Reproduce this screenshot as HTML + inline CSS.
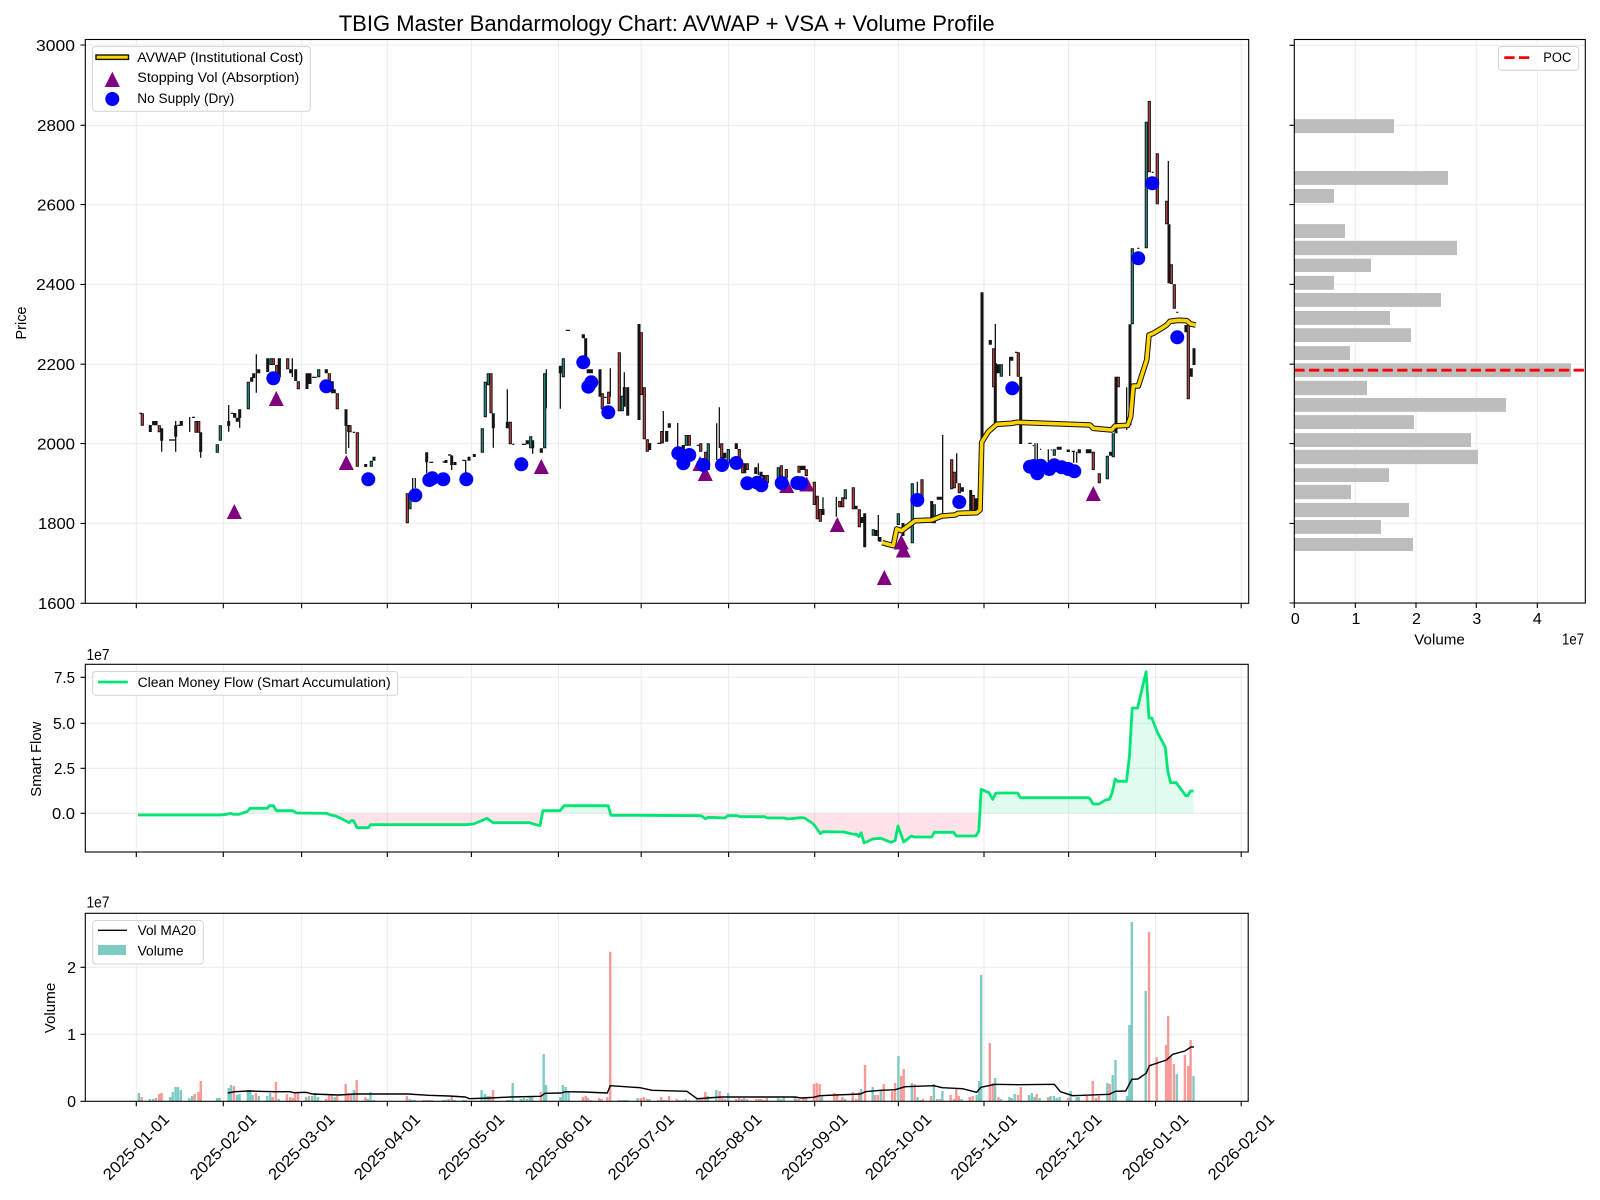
<!DOCTYPE html>
<html lang="en">
<head>
<meta charset="utf-8">
<title>TBIG Master Bandarmology Chart</title>
<style>
html,body{margin:0;padding:0;background:#fff;width:1600px;height:1200px;overflow:hidden}
svg{display:block}
text{font-family:"Liberation Sans",sans-serif;fill:#000}
.t{font-size:16px}
.l{font-size:14.5px}
.g{font-size:13.5px}
</style>
</head>
<body>
<svg width="1600" height="1200" viewBox="0 0 1600 1200" xmlns="http://www.w3.org/2000/svg">
<defs>
<clipPath id="above"><rect x="85" y="664" width="1164" height="149.3"/></clipPath>
<clipPath id="below"><rect x="85" y="813.3" width="1164" height="39"/></clipPath>
<path id="mf" d="M138 815L220.4 815L226.5 814.3L230.6 813.3L233.5 814.3L238.8 814.3L246.9 811.7L250.2 808.3L267.3 808.3L269.4 805.7L273.5 805.7L276.3 810.7L292.7 810.7L296.7 813L326.5 813.3L330.6 815L334.7 815.7L340.8 818.3L349 822.7L351 820.7L353.5 820.7L357.1 827.7L368.2 827.7L370.6 824.7L465.3 824.7L473.5 824L481.6 820.7L486.9 818.3L493.1 822.7L529.4 822.7L534.7 824.3L540 825.7L542.9 810.7L560 810.7L564.1 805.7L608.2 805.7L611 815.3L640 815.3L701.2 815.7L705.3 818.7L708.6 817.3L717.6 817.7L724.9 818L727.8 815.7L737.1 815.7L740 816.7L764.5 816.7L767.3 818L784.9 818L786.9 819L801.2 817.7L804.5 818L813.5 824L820.4 833.7L822.9 831.7L844.1 832L852.2 834L856.3 834.3L858.8 836.7L861.2 832.7L864.1 843L872.7 839L880.8 838.3L891 842.3L895.1 840.7L898 826L903.7 842L911.4 836L914.3 837L931.8 837L934.3 832.3L953.5 832.3L956.3 836L975.9 836L978.8 831L981.2 789.3L989 792.7L992.7 799.3L995.9 793L1017.6 793L1020.4 797.7L1088.2 797.7L1090.2 799L1093.1 804L1099.2 804L1105.3 800L1109.4 799.3L1112.2 792.7L1115.1 779L1117.6 781.3L1126.5 781.3L1129.4 756.7L1132.2 708L1137.6 708L1146.1 671.7L1149 718L1151.8 718L1157.6 732.7L1165.3 747.3L1167.8 771L1170.6 782.7L1176.3 782.7L1185.7 795.7L1187.8 795.7L1190.6 791L1193.5 791"/>
<path id="mfa" d="M138 813.3L138 815L220.4 815L226.5 814.3L230.6 813.3L233.5 814.3L238.8 814.3L246.9 811.7L250.2 808.3L267.3 808.3L269.4 805.7L273.5 805.7L276.3 810.7L292.7 810.7L296.7 813L326.5 813.3L330.6 815L334.7 815.7L340.8 818.3L349 822.7L351 820.7L353.5 820.7L357.1 827.7L368.2 827.7L370.6 824.7L465.3 824.7L473.5 824L481.6 820.7L486.9 818.3L493.1 822.7L529.4 822.7L534.7 824.3L540 825.7L542.9 810.7L560 810.7L564.1 805.7L608.2 805.7L611 815.3L640 815.3L701.2 815.7L705.3 818.7L708.6 817.3L717.6 817.7L724.9 818L727.8 815.7L737.1 815.7L740 816.7L764.5 816.7L767.3 818L784.9 818L786.9 819L801.2 817.7L804.5 818L813.5 824L820.4 833.7L822.9 831.7L844.1 832L852.2 834L856.3 834.3L858.8 836.7L861.2 832.7L864.1 843L872.7 839L880.8 838.3L891 842.3L895.1 840.7L898 826L903.7 842L911.4 836L914.3 837L931.8 837L934.3 832.3L953.5 832.3L956.3 836L975.9 836L978.8 831L981.2 789.3L989 792.7L992.7 799.3L995.9 793L1017.6 793L1020.4 797.7L1088.2 797.7L1090.2 799L1093.1 804L1099.2 804L1105.3 800L1109.4 799.3L1112.2 792.7L1115.1 779L1117.6 781.3L1126.5 781.3L1129.4 756.7L1132.2 708L1137.6 708L1146.1 671.7L1149 718L1151.8 718L1157.6 732.7L1165.3 747.3L1167.8 771L1170.6 782.7L1176.3 782.7L1185.7 795.7L1187.8 795.7L1190.6 791L1193.5 791L1193.5 813.3Z"/>
</defs>
<rect width="1600" height="1200" fill="#fff"/>

<text x="338.7" y="31" font-size="22" textLength="656" lengthAdjust="spacingAndGlyphs">TBIG Master Bandarmology Chart: AVWAP + VSA + Volume Profile</text>

<!-- MAIN PANEL GRID -->
<path fill="none" stroke="#ebebeb" stroke-width="1" d="M136.3 39.5V603.3M223.3 39.5V603.3M301.6 39.5V603.3M387.3 39.5V603.3M471.4 39.5V603.3M558.4 39.5V603.3M641.2 39.5V603.3M728.6 39.5V603.3M814.7 39.5V603.3M898.4 39.5V603.3M984 39.5V603.3M1068.6 39.5V603.3M1155.5 39.5V603.3M1241.2 39.5V603.3M85.3 45H1248.7M85.3 125.5H1248.7M85.3 204.8H1248.7M85.3 284.4H1248.7M85.3 364.2H1248.7M85.3 443.6H1248.7M85.3 523.4H1248.7"/>

<!-- CANDLES: wicks -->
<path fill="none" stroke="#000" stroke-width="1.2" d="M161.7 440V451.7M175.7 421V451.7M189.7 417V432M200.7 450V457.7M228.7 405V431.7M239.7 418V427.7M256.3 354.3V392.7M292.3 358.3V377M346 426V454M348.7 432V448M412.7 478V493M415.3 478V488M426.7 462V473.3M451.7 455V470M465.7 460V473M493.3 428V447.7M507.3 389.3V421.7M532.7 448V453.7M546.3 369.3V408.3M560.3 373V408.7M610.3 368.3V396.7M624.3 372.3V387M663.3 411V443.3M677.7 423V446.7M716.7 423.3V460M719.3 407.3V448M758.3 463.3V475M836.3 496.7V516.7M823 497.3V509M878.3 515V541M917.3 481.7V496M942.7 435V513.3M956.7 453.3V483.3M995.3 324V363M1009.7 356.7V376M1035 443.3V460M1037.3 443.3V460M1048.3 449.3V461.7M1073.7 451.7V462.7M1076.7 451.7V462.7M1126.7 387.3V430M1168.3 161V224.3M139.3 413.3H142M169 440H175M177.3 425.3H180M192 417.3H195M230.7 413.3H233.3M312 377.3H316.7M352.7 432.3H355M429.3 462.3H433.3M442.7 462H445M448 455H451M462.3 460.3H465M512.3 444.3H514.3M521.7 444.3H526M565.7 330.3H570M604 397.3H606.7M657.3 443.3H661.7M696.7 445.3H699M1028.3 443.3H1031.7M1032.7 445.7H1034M1040 449.3H1041.3M1050.7 450H1051.7M1071.7 451.3H1075M1015 352.3H1017.3M1137.3 248.3H1139.3M1151.7 172.3H1153.7M1176.3 312.3H1178.3"/>
<!-- CANDLES: black bodies/outlines -->
<path fill="none" stroke="#141414" stroke-width="3" d="M150.3 425V432M161.7 428.3V440.7M175.7 425.3V436.7M200.7 432.3V452M228.7 421V426M239.7 409.3V418M253.7 373.3V378M267.7 358.3V372M295.7 369.3V381M307 373.3V389M310 373.3V384M332.3 381.3V393.3M334.3 389.3V393.3M346 409.3V426M348.7 425V432M365.7 464V467M374 456.7V460.7M426.7 452.3V462.3M446 460V463M451.7 456V465M455 462V465M469 456.7V460.7M474.3 454V457M493.3 413.3V428.3M507.3 421.7V428.3M532.7 440.3V448.3M560.3 365.7V373.3M585.7 338.3V366.7M600 369.3V396.7M627.7 387.3V415.7M639 324V420M624.3 387V406.7M649.7 443V450M764 475V485M755.7 467.3V474M744.7 463.3V473.3M823 509V515M876 530V536M880 537V541.7M864.7 513.3V547.3M861.7 517V523M903 523V536M931.7 501V523M976 498.3V511.7M970.7 490V510M982 292.3V440M995.3 363V423.3M998.3 364.3V373.3M1020.7 376.7V444M1116 376.7V433.3M1130 324.3V425M1169 224.3V283.3M1191.3 368.3V376.7M1194 348.3V365M1087.3 449.3V453.3M1090 449.3V453.3M936.7 498.3H942.7M1056.7 448.3H1061.7"/>
<!-- Red candle outlines + fills -->
<path fill="none" stroke="#141414" stroke-width="3.2" d="M142.3 413.3V425.7M156 421V425.3M159.3 425.3V432.3M196 421V432.7M198.7 421V432.7M234.7 413V417.7M273.3 358.3V365M276.7 365V373.3M287.7 358.3V369.3M290.7 369.3V373.3M298.3 381.3V389.3M326.3 369.3V373.3M329.3 373.3V381.7M337.3 393.3V409.3M350 425.3V432.3M357.3 432.3V466.7M407.3 493.3V523.3M491 373.3V413.3M510.3 421.7V444.3M541.3 448.3V452.7M583.3 334.3V338.3M588.3 369.3V373.3M591.3 369.3V373.3M602.3 393.3V409.3M608.7 391.7V404M619.3 352.3V411.3M641.3 332.3V395M644.3 387.3V439.3M647.3 439.3V451.7M661.7 431V443.3M669.3 423.3V427.7M683.3 445V453M689.3 435V445.7M700.7 443.3V451.7M705.7 451.7V463.3M721.7 443.3V458.3M724.7 452.7V458.3M736.3 443.3V449M739.3 449V463.3M742.7 463.3V473.3M747.3 463.3V470M761 471.7V476.7M767.3 475V483.3M781.3 465.3V476.7M786.3 469V478.3M799 465.7V472.7M801.7 465.7V470M804 465.7V470M806.3 469.3V476M814.3 481.7V505M817.3 495.7V519.3M820.3 509V521.7M839.7 501V507.3M842.7 497.3V507.3M853.3 487.3V509.3M856 505.7V509.3M859.3 509.3V527.3M922 479.3V503.3M951.7 459.3V489.3M954.3 471.7V488.3M959.3 483.3V493.3M973.3 495V510.7M990.3 340V344.7M993.7 348.3V387.3M1018.3 352.3V376.7M1068.3 449.5V452M1093.3 451.7V470M1099.3 473.3V483.3M1110.7 451.7V455.7M1118.3 376.7V387.3M1149.3 101V172.3M1157.3 153.3V204.3M1166.7 200.7V224.3M1171.3 264.3V284M1174.3 284.3V308.7M1186 325V332.3M1188.3 325V399.3"/>
<path fill="none" stroke="#141414" stroke-width="3.2" d="M153.7 421V425.3M181.3 421V425.7M217.3 444.3V452.7M220.3 425.3V440.7M237.3 417.7V421.7M248.3 381.7V409.3M251.7 377.3V381.7M258.7 369.3V373.3M271 358.3V365M279.3 358.3V377.3M318.7 369.3V377.3M371.3 460.7V466.7M410 493.3V509.3M482.3 428.3V452.7M485.3 381.7V417.3M488.3 373.3V385.3M527.3 440.3V444.3M530.7 436.3V448.3M544.7 373.3V448.3M563.3 358.3V377.3M622.3 395.7V411.3M666.7 431V441.7M686.3 435V445.7M708.3 443.3V470M728.3 449V463.3M778.3 467.3V480M845.3 489.3V499.3M873.3 529.3V535.7M898.3 513.3V525M912.3 483.3V543.3M934.3 504.3V523.3M962.3 487.3V491.7M1001.3 364.3V376.7M1011.7 356.7V360.7M1054.3 449.3V455.7M1079.3 449.3V453.3M1107.3 455.7V479.3M1113.3 433.3V457.3M1132.3 248.3V324.3M1146.3 121.7V248.3"/>
<path fill="none" stroke="#b5403d" stroke-width="1.3" d="M142.3 414.3V424.7M159.3 426.3V431.3M196 422V431.7M198.7 422V431.7M273.3 359.3V364M276.7 366V372.3M287.7 359.3V368.3M298.3 382.3V388.3M329.3 374.3V380.7M337.3 394.3V408.3M350 426.3V431.3M357.3 433.3V465.7M407.3 494.3V522.3M491 374.3V412.3M510.3 422.7V443.3M602.3 394.3V408.3M608.7 392.7V403M619.3 353.3V410.3M641.3 333.3V394M644.3 388.3V438.3M647.3 440.3V450.7M661.7 432V442.3M689.3 436V444.7M700.7 444.3V450.7M705.7 452.7V462.3M721.7 444.3V457.3M739.3 450V462.3M742.7 464.3V472.3M747.3 464.3V469M767.3 476V482.3M781.3 466.3V475.7M786.3 470V477.3M799 466.7V471.7M806.3 470.3V475M814.3 482.7V504M817.3 496.7V518.3M820.3 510V520.7M839.7 502V506.3M842.7 498.3V506.3M853.3 488.3V508.3M859.3 510.3V526.3M922 480.3V502.3M951.7 460.3V488.3M954.3 472.7V487.3M959.3 484.3V492.3M973.3 496V509.7M993.7 349.3V386.3M1018.3 353.3V375.7M1093.3 452.7V469M1099.3 474.3V482.3M1118.3 377.7V386.3M1149.3 102V171.3M1157.3 154.3V203.3M1166.7 201.7V223.3M1171.3 265.3V283M1174.3 285.3V307.7M1188.3 326V398.3"/>
<path fill="none" stroke="#1f8a80" stroke-width="1.3" d="M217.3 445.3V451.7M220.3 426.3V439.7M248.3 382.7V408.3M271 359.3V364M318.7 370.3V376.3M371.3 461.7V465.7M410 494.3V508.3M482.3 429.3V451.7M485.3 382.7V416.3M488.3 374.3V384.3M530.7 437.3V447.3M544.7 374.3V447.3M563.3 359.3V376.3M622.3 396.7V410.3M686.3 436V444.7M708.3 444.3V469M728.3 450V462.3M778.3 468.3V479M845.3 490.3V498.3M873.3 530.3V534.7M898.3 514.3V524M912.3 484.3V542.3M934.3 505.3V522.3M1001.3 365.3V375.7M1054.3 450.3V454.7M1107.3 456.7V478.3M1113.3 434.3V456.3M1132.3 249.3V323.3M1146.3 122.7V247.3"/>

<!-- AVWAP -->
<path fill="none" stroke="#111" stroke-width="5.6" stroke-linejoin="round" d="M882.3 542.7L893.3 545.7L896.7 529L901.7 530.7L915 520.7L931.7 520L941.7 516L955 515L958.3 513.3L976.7 512.7L980 510L981.7 442.3L988.3 431.7L996.7 424.3L1011.7 423.3L1017.3 422.3L1090 425L1093.3 428.3L1111.7 430L1115 426L1127.7 425.3L1130.7 416.7L1133.3 386L1138.3 386L1146.7 360L1149 335L1153.3 333.3L1161.7 328.3L1166.7 325L1170 321.3L1178.3 320.3L1186.7 320.7L1190.7 324L1195.7 325"/>
<path fill="none" stroke="#ffd500" stroke-width="3.6" stroke-linejoin="round" d="M882.3 542.7L893.3 545.7L896.7 529L901.7 530.7L915 520.7L931.7 520L941.7 516L955 515L958.3 513.3L976.7 512.7L980 510L981.7 442.3L988.3 431.7L996.7 424.3L1011.7 423.3L1017.3 422.3L1090 425L1093.3 428.3L1111.7 430L1115 426L1127.7 425.3L1130.7 416.7L1133.3 386L1138.3 386L1146.7 360L1149 335L1153.3 333.3L1161.7 328.3L1166.7 325L1170 321.3L1178.3 320.3L1186.7 320.7L1190.7 324L1195.7 325"/>

<!-- Triangles -->
<path fill="#800080" d="M234.3 504l7.5 15h-15zM276.3 391l7.5 15h-15zM346.3 455l7.5 15h-15zM541.3 459l7.5 15h-15zM700 456l7.5 15h-15zM705.3 466l7.5 15h-15zM786.7 478l7.5 15h-15zM806.7 476.5l7.5 15h-15zM837.3 517l7.5 15h-15zM884.3 570l7.5 15h-15zM901.3 534.5l7.5 15h-15zM903.3 542.5l7.5 15h-15zM1093.3 486l7.5 15h-15z"/>
<!-- Blue circles -->
<g fill="#0000ff">
<circle cx="273.3" cy="378.3" r="7"/><circle cx="326.3" cy="386.3" r="7"/><circle cx="368.3" cy="479.3" r="7"/><circle cx="415.3" cy="495.3" r="7"/><circle cx="429.3" cy="480" r="7"/><circle cx="432.3" cy="478.3" r="7"/><circle cx="443.3" cy="479.3" r="7"/><circle cx="466.3" cy="479.3" r="7"/><circle cx="521.3" cy="464.3" r="7"/><circle cx="583.3" cy="362.3" r="7"/><circle cx="588.3" cy="386.7" r="7"/><circle cx="591.3" cy="382.3" r="7"/><circle cx="608.3" cy="412.3" r="7"/><circle cx="678.3" cy="453.3" r="7"/><circle cx="683.3" cy="463.3" r="7"/><circle cx="689.3" cy="455" r="7"/><circle cx="703.3" cy="465" r="7"/><circle cx="722" cy="465" r="7"/><circle cx="736.3" cy="463" r="7"/><circle cx="747.3" cy="483.3" r="7"/><circle cx="757.3" cy="482.7" r="7"/><circle cx="761.3" cy="485.3" r="7"/><circle cx="781.7" cy="483" r="7"/><circle cx="797.3" cy="483" r="7"/><circle cx="801" cy="483.3" r="7"/><circle cx="917.3" cy="500" r="7"/><circle cx="959.3" cy="502" r="7"/><circle cx="1012.3" cy="388.3" r="7"/><circle cx="1030" cy="466.7" r="7"/><circle cx="1034" cy="466" r="7"/><circle cx="1037.3" cy="473.3" r="7"/><circle cx="1040.7" cy="465.7" r="7"/><circle cx="1049.3" cy="469" r="7"/><circle cx="1054.3" cy="465.3" r="7"/><circle cx="1061.7" cy="467.3" r="7"/><circle cx="1068.3" cy="469" r="7"/><circle cx="1074.3" cy="471.3" r="7"/><circle cx="1177.3" cy="337.3" r="7"/><circle cx="1138.3" cy="258.3" r="7"/><circle cx="1152.3" cy="183.3" r="7"/>
</g>

<!-- Main axes frame + ticks -->
<rect x="85.3" y="39.5" width="1163.4" height="563.8" fill="none" stroke="#000" stroke-width="1.1"/>
<path fill="none" stroke="#000" stroke-width="1.1" d="M80.5 45H85.3M80.5 125.3H85.3M80.5 204.6H85.3M80.5 284.4H85.3M80.5 364.2H85.3M80.5 443.6H85.3M80.5 523.4H85.3M80.5 603.3H85.3M136.3 603.3V608.2M223.3 603.3V608.2M301.6 603.3V608.2M387.3 603.3V608.2M471.4 603.3V608.2M558.4 603.3V608.2M641.2 603.3V608.2M728.6 603.3V608.2M814.7 603.3V608.2M898.4 603.3V608.2M984 603.3V608.2M1068.6 603.3V608.2M1155.5 603.3V608.2M1241.2 603.3V608.2"/>
<g class="t">
<text class="t" x="75" y="50.8" text-anchor="end" textLength="39" lengthAdjust="spacingAndGlyphs">3000</text>
<text class="t" x="75" y="130.8" text-anchor="end" textLength="38" lengthAdjust="spacingAndGlyphs">2800</text>
<text class="t" x="75" y="210.3" text-anchor="end" textLength="38" lengthAdjust="spacingAndGlyphs">2600</text>
<text class="t" x="75" y="290" text-anchor="end" textLength="39" lengthAdjust="spacingAndGlyphs">2400</text>
<text class="t" x="75" y="369.9" text-anchor="end" textLength="38" lengthAdjust="spacingAndGlyphs">2200</text>
<text class="t" x="75" y="449.3" text-anchor="end" textLength="38" lengthAdjust="spacingAndGlyphs">2000</text>
<text class="t" x="75" y="529.1" text-anchor="end" textLength="37" lengthAdjust="spacingAndGlyphs">1800</text>
<text class="t" x="75" y="608.9" text-anchor="end" textLength="37" lengthAdjust="spacingAndGlyphs">1600</text>
</g>
<text class="l" transform="translate(26,323) rotate(-90)" text-anchor="middle" textLength="33" lengthAdjust="spacingAndGlyphs">Price</text>

<!-- Main legend -->
<rect x="92.5" y="46.5" width="217.8" height="64.8" rx="3" fill="#fff" fill-opacity=".85" stroke="#d4d4d4" stroke-width="1"/>
<rect x="96" y="55" width="32.5" height="4.4" fill="#ffd500" stroke="#111" stroke-width="1.4"/>
<path fill="#800080" d="M112.3 71.7l7.6 15.3h-15.2z"/>
<circle cx="112.3" cy="99" r="7" fill="#0000ff"/>
<text class="g" x="137.3" y="62" textLength="166" lengthAdjust="spacingAndGlyphs">AVWAP (Institutional Cost)</text>
<text class="g" x="137.3" y="82" textLength="162" lengthAdjust="spacingAndGlyphs">Stopping Vol (Absorption)</text>
<text class="g" x="137.3" y="103" textLength="97" lengthAdjust="spacingAndGlyphs">No Supply (Dry)</text>

<!-- RIGHT PANEL -->
<path fill="none" stroke="#ebebeb" stroke-width="1" d="M1355.3 39.5V603M1416 39.5V603M1476.3 39.5V603M1537.3 39.5V603M1294.3 45.3H1585.3M1294.3 125.3H1585.3M1294.3 204.6H1585.3M1294.3 284.4H1585.3M1294.3 364.2H1585.3M1294.3 443.6H1585.3M1294.3 523.4H1585.3"/>
<g fill="#bdbdbd">
<rect x="1294.3" y="119.2" width="99.7" height="13.9"/>
<rect x="1294.3" y="171" width="153.7" height="13.9"/>
<rect x="1294.3" y="189" width="39.7" height="13.9"/>
<rect x="1294.3" y="224.1" width="50.7" height="13.9"/>
<rect x="1294.3" y="240.8" width="162.7" height="14.3"/>
<rect x="1294.3" y="258.7" width="76.7" height="13.3"/>
<rect x="1294.3" y="275.9" width="39.7" height="13.9"/>
<rect x="1294.3" y="293" width="146.7" height="13.9"/>
<rect x="1294.3" y="311" width="95.7" height="13.9"/>
<rect x="1294.3" y="328.2" width="116.7" height="13.8"/>
<rect x="1294.3" y="346.1" width="55.7" height="13.9"/>
<rect x="1294.3" y="363.3" width="276.7" height="13.8"/>
<rect x="1294.3" y="380.8" width="72.7" height="14.3"/>
<rect x="1294.3" y="398" width="211.7" height="13.8"/>
<rect x="1294.3" y="415.1" width="119.7" height="13.9"/>
<rect x="1294.3" y="433.1" width="176.7" height="13.9"/>
<rect x="1294.3" y="449.8" width="183.7" height="14.3"/>
<rect x="1294.3" y="468.2" width="94.7" height="13.8"/>
<rect x="1294.3" y="484.9" width="56.7" height="14.3"/>
<rect x="1294.3" y="502.9" width="114.7" height="14.2"/>
<rect x="1294.3" y="520" width="86.7" height="13.9"/>
<rect x="1294.3" y="538" width="118.7" height="13"/>
</g>
<path d="M1294.3 370.2H1585.3" fill="none" stroke="#ff0000" stroke-width="2.8" stroke-dasharray="10.3 4.4"/>
<rect x="1294.3" y="39.5" width="291" height="563.5" fill="none" stroke="#000" stroke-width="1.1"/>
<path fill="none" stroke="#000" stroke-width="1.1" d="M1289.5 45.3H1294.3M1289.5 125.3H1294.3M1289.5 204.6H1294.3M1289.5 284.4H1294.3M1289.5 364.2H1294.3M1289.5 443.6H1294.3M1289.5 523.4H1294.3M1289.5 603H1294.3M1294.3 603V608M1355.3 603V608M1416 603V608M1476.3 603V608M1537.3 603V608"/>
<text class="t" x="1295.3" y="624" text-anchor="middle">0</text>
<text class="t" x="1356" y="624" text-anchor="middle">1</text>
<text class="t" x="1416.5" y="624" text-anchor="middle">2</text>
<text class="t" x="1476.8" y="624" text-anchor="middle">3</text>
<text class="t" x="1537.3" y="624" text-anchor="middle">4</text>
<text class="l" x="1414.3" y="644.5" textLength="50.5" lengthAdjust="spacingAndGlyphs">Volume</text>
<text class="t" x="1562" y="644.5" textLength="22" lengthAdjust="spacingAndGlyphs">1e7</text>
<rect x="1498.5" y="46.5" width="80.2" height="23.7" rx="3" fill="#fff" fill-opacity=".85" stroke="#d4d4d4" stroke-width="1"/>
<path d="M1504.3 57.6H1530" fill="none" stroke="#ff0000" stroke-width="2.8" stroke-dasharray="10.3 4.4"/>
<text class="g" x="1543.3" y="62" textLength="28" lengthAdjust="spacingAndGlyphs">POC</text>

<!-- SMART FLOW PANEL -->
<path fill="none" stroke="#ebebeb" stroke-width="1" d="M136.3 664.3V852M223.3 664.3V852M301.6 664.3V852M387.3 664.3V852M471.4 664.3V852M558.4 664.3V852M641.2 664.3V852M728.6 664.3V852M814.7 664.3V852M898.4 664.3V852M984 664.3V852M1068.6 664.3V852M1155.5 664.3V852M1241.2 664.3V852M85.3 677.3H1248.2M85.3 723.3H1248.2M85.3 768.3H1248.2M85.3 813.3H1248.2"/>
<g clip-path="url(#above)"><use href="#mfa" fill="#00e676" fill-opacity=".12" stroke="none"/></g>
<g clip-path="url(#below)"><use href="#mfa" fill="#ff1744" fill-opacity=".12" stroke="none"/></g>
<path d="M138 813.3H1193.5" fill="none" stroke="#e6e6e6" stroke-width="1"/>
<use href="#mf" fill="none" stroke="#00e676" stroke-width="2.8" stroke-linejoin="round"/>
<rect x="85.3" y="664.3" width="1162.9" height="187.7" fill="none" stroke="#000" stroke-width="1.1"/>
<path fill="none" stroke="#000" stroke-width="1.1" d="M80.5 677.3H85.3M80.5 723.3H85.3M80.5 768.3H85.3M80.5 813.3H85.3M136.3 852V857M223.3 852V857M301.6 852V857M387.3 852V857M471.4 852V857M558.4 852V857M641.2 852V857M728.6 852V857M814.7 852V857M898.4 852V857M984 852V857M1068.6 852V857M1155.5 852V857M1241.2 852V857"/>
<text class="t" x="75" y="683" text-anchor="end" textLength="21" lengthAdjust="spacingAndGlyphs">7.5</text>
<text class="t" x="75" y="729" text-anchor="end" textLength="22" lengthAdjust="spacingAndGlyphs">5.0</text>
<text class="t" x="75" y="774" text-anchor="end" textLength="21" lengthAdjust="spacingAndGlyphs">2.5</text>
<text class="t" x="75" y="819" text-anchor="end" textLength="23" lengthAdjust="spacingAndGlyphs">0.0</text>
<text class="t" x="86.5" y="660" textLength="23" lengthAdjust="spacingAndGlyphs">1e7</text>
<text class="l" transform="translate(41,759.2) rotate(-90)" text-anchor="middle" textLength="75" lengthAdjust="spacingAndGlyphs">Smart Flow</text>
<rect x="92.7" y="671.5" width="304.9" height="23.8" rx="3" fill="#fff" fill-opacity=".85" stroke="#d4d4d4" stroke-width="1"/>
<path d="M98 682H127.8" fill="none" stroke="#00e676" stroke-width="2.8"/>
<text class="g" x="137.6" y="687" textLength="253" lengthAdjust="spacingAndGlyphs">Clean Money Flow (Smart Accumulation)</text>

<!-- VOLUME PANEL -->
<path fill="none" stroke="#ebebeb" stroke-width="1" d="M136.3 913.3V1101.3M223.3 913.3V1101.3M301.6 913.3V1101.3M387.3 913.3V1101.3M471.4 913.3V1101.3M558.4 913.3V1101.3M641.2 913.3V1101.3M728.6 913.3V1101.3M814.7 913.3V1101.3M898.4 913.3V1101.3M984 913.3V1101.3M1068.6 913.3V1101.3M1155.5 913.3V1101.3M1241.2 913.3V1101.3M85.3 967.3H1248.2M85.3 1034.3H1248.2"/>
<path fill="none" stroke="#7fcbc4" stroke-width="2.4" d="M138.8 1093V1101M149.8 1099V1101M153.1 1099V1101M170.2 1097V1101M172.7 1092V1101M175.5 1087V1101M178 1087V1101M180.8 1090V1101M189.4 1098V1101M192.2 1096V1101M217.1 1098V1101M219.6 1098V1101M228.6 1088V1101M231 1085V1101M237.1 1095V1101M239.6 1094V1101M247.8 1090V1101M250.2 1090V1101M252.7 1095V1101M258.8 1096V1101M267.3 1096V1101M270.2 1093V1101M278.8 1099V1101M306.1 1097V1101M312.2 1096V1101M315.1 1093V1101M318 1097V1101M334.7 1097V1101M353.9 1090V1101M367.8 1099V1101M370.6 1092V1101M373.5 1100V1101M409.8 1099V1101M412.2 1100V1101M414.7 1100V1101M431.8 1100V1101M442.9 1100V1101M445.7 1100V1101M448.6 1099V1101M454.3 1100V1101M463.3 1100V1101M465.7 1100V1101M481.6 1090V1101M484.9 1094V1101M487.8 1096V1101M507.3 1100V1101M509.8 1100V1101M512.7 1083V1101M520.8 1099V1101M523.7 1098V1101M526.9 1099V1101M529.8 1097V1101M532.2 1097V1101M543.7 1054V1101M546.1 1085V1101M560.4 1097V1101M562.9 1085V1101M565.7 1087V1101M568.6 1092V1101M621.6 1100V1101M624.5 1100V1101M627.3 1100V1101M637.6 1098V1101M649.4 1099V1101M658.4 1100V1101M663.7 1100V1101M666.1 1100V1101M685.7 1099V1101M696.7 1099V1101M707.8 1096V1101M716.3 1090V1101M728.2 1093V1101M744.1 1098V1101M764.1 1100V1101M778 1098V1101M780.8 1099V1101M783.7 1097V1101M795.1 1097V1101M822 1096V1101M844.9 1099V1101M861.2 1089V1101M872.7 1087V1101M880.8 1091V1101M898.4 1056V1101M911.8 1083V1101M917.6 1097V1101M920.4 1100V1101M933.9 1084V1101M937.1 1099V1101M942.4 1091V1101M961.6 1099V1101M976.7 1095V1101M979.2 1081V1101M981.2 975V1101M995.1 1078V1101M1000.8 1099V1101M1009.4 1097V1101M1011.8 1098V1101M1014.7 1094V1101M1029 1095V1101M1031.8 1093V1101M1034.3 1097V1101M1039.6 1098V1101M1050.6 1096V1101M1053.9 1096V1101M1056.7 1098V1101M1059.6 1097V1101M1070.6 1091V1101M1076.7 1097V1101M1078.8 1097V1101M1107.3 1083V1101M1112.7 1075V1101M1115.5 1060V1101M1127 1096V1101M1129.4 1025V1101M1131.8 922V1101M1145.7 991V1101M1176.8 1074V1101M1193.5 1076V1101"/>
<path fill="none" stroke="#f79a98" stroke-width="2.4" d="M141.6 1097V1101M155.9 1098V1101M159.2 1094V1101M161.6 1093V1101M194.7 1094V1101M198.4 1092V1101M200.8 1081V1101M233.9 1086V1101M255.9 1093V1101M272.7 1097V1101M275.9 1082V1101M286.9 1094V1101M290.2 1097V1101M292.7 1098V1101M295.1 1092V1101M298 1093V1101M309 1096V1101M326.1 1099V1101M329 1095V1101M331.8 1094V1101M337.1 1096V1101M345.7 1084V1101M348.2 1093V1101M351 1095V1101M356.7 1080V1101M365.3 1097V1101M406.9 1096V1101M423.7 1100V1101M426.5 1100V1101M429 1100V1101M451.8 1097V1101M490.2 1096V1101M493.1 1090V1101M540.8 1092V1101M582.9 1097V1101M585.7 1096V1101M587.8 1098V1101M590.6 1100V1101M599.2 1098V1101M601.6 1099V1101M607.3 1097V1101M610.2 951.7V1101M618.8 1100V1101M640.8 1098V1101M643.7 1097V1101M646.9 1099V1101M661.2 1097V1101M669 1096V1101M676.7 1099V1101M679.6 1100V1101M682.9 1100V1101M689 1100V1101M699.6 1099V1101M702.4 1098V1101M705.3 1092V1101M719.6 1091V1101M722.4 1098V1101M725.3 1099V1101M736.3 1099V1101M739.2 1098V1101M742 1099V1101M746.9 1099V1101M756.3 1099V1101M759.2 1099V1101M761.2 1099V1101M766.9 1098V1101M796.3 1099V1101M799.2 1099V1101M803.3 1098V1101M806.1 1098V1101M813.9 1084V1101M816.7 1083V1101M819.6 1084V1101M834.3 1093V1101M837.1 1094V1101M840 1100V1101M842.4 1097V1101M852.7 1092V1101M856.3 1099V1101M859.2 1092V1101M865 1065V1101M875.1 1095V1101M877.9 1095V1101M883.7 1084V1101M892.2 1091V1101M895.1 1083V1101M901.2 1076V1101M903.7 1069V1101M914.7 1084V1101M922.9 1099V1101M931 1096V1101M940 1099V1101M950.6 1095V1101M953.9 1099V1101M956.3 1088V1101M958.8 1096V1101M969.8 1097V1101M972.7 1096V1101M989.8 1043V1101M992.7 1083V1101M998.4 1097V1101M1018 1095V1101M1020.8 1087V1101M1036.7 1094V1101M1048.2 1097V1101M1068.2 1098V1101M1087 1096V1101M1092.7 1081V1101M1095.9 1098V1101M1098.8 1096V1101M1109.8 1084V1101M1149 932V1101M1156.7 1057.3V1101M1166.1 1045V1101M1168.2 1016V1101M1170.6 1056.7V1101M1173.9 1064V1101M1184.9 1055V1101M1188.2 1066V1101M1190.6 1040V1101"/>
<path fill="none" stroke="#000" stroke-width="1.4" stroke-linejoin="round" d="M227.8 1093L234.7 1091.7L249 1091L273.5 1091.7L289.8 1091.7L293.9 1092.7L306.1 1092.3L312.2 1094L338.8 1095L355.1 1094L408.2 1094L428.6 1095.3L449 1096L465.3 1097L469.4 1098.7L489.8 1098L510.2 1097L540.8 1096.3L544.9 1093.3L561.2 1093L565.3 1091.7L583.7 1092L607.3 1093L610.2 1085.7L640 1087.7L652.2 1090.3L686.9 1091.3L697.1 1098.7L721.6 1097L795.1 1097L801.2 1098L813.5 1097.3L819.6 1095.7L860.4 1094L865.3 1091.7L880.8 1090.3L895.1 1089.7L905.3 1086.7L933.9 1085.7L942 1087.7L962.4 1088.7L976.7 1092.3L980.8 1087.3L995.1 1084.3L1019.6 1084.7L1054.3 1084.3L1060.4 1091.7L1072.7 1095.7L1109.4 1094.3L1115.5 1091.3L1125.7 1091L1131.8 1079.3L1137.9 1079L1146.1 1073.3L1149.4 1065.7L1166.5 1060L1172.7 1054.3L1184.9 1051L1191 1047L1193.9 1047"/>
<rect x="85.3" y="913.3" width="1162.9" height="188" fill="none" stroke="#000" stroke-width="1.1"/>
<path fill="none" stroke="#000" stroke-width="1.1" d="M80.5 967.3H85.3M80.5 1034.3H85.3M80.5 1101.3H85.3M136.3 1101.3V1106.2M223.3 1101.3V1106.2M301.6 1101.3V1106.2M387.3 1101.3V1106.2M471.4 1101.3V1106.2M558.4 1101.3V1106.2M641.2 1101.3V1106.2M728.6 1101.3V1106.2M814.7 1101.3V1106.2M898.4 1101.3V1106.2M984 1101.3V1106.2M1068.6 1101.3V1106.2M1155.5 1101.3V1106.2M1241.2 1101.3V1106.2"/>
<text class="t" x="76" y="973" text-anchor="end">2</text>
<text class="t" x="76" y="1040" text-anchor="end">1</text>
<text class="t" x="76" y="1107" text-anchor="end">0</text>
<text class="t" x="86.5" y="907.3" textLength="23" lengthAdjust="spacingAndGlyphs">1e7</text>
<text class="l" transform="translate(55,1008) rotate(-90)" text-anchor="middle" textLength="50.5" lengthAdjust="spacingAndGlyphs">Volume</text>
<rect x="92.7" y="920.5" width="110.6" height="43.5" rx="3" fill="#fff" fill-opacity=".85" stroke="#d4d4d4" stroke-width="1"/>
<path d="M98 930.3H127" fill="none" stroke="#000" stroke-width="1.4"/>
<rect x="98" y="945" width="28" height="10" fill="#7fcbc4"/>
<text class="g" x="137.6" y="935" textLength="58.5" lengthAdjust="spacingAndGlyphs">Vol MA20</text>
<text class="g" x="137.6" y="955.3" textLength="46" lengthAdjust="spacingAndGlyphs">Volume</text>

<!-- DATE LABELS -->
<g class="t">
<text class="t" transform="translate(136,1146.7) rotate(-45)" y="5.5" text-anchor="middle" textLength="86" lengthAdjust="spacingAndGlyphs">2025-01-01</text>
<text class="t" transform="translate(223,1146.7) rotate(-45)" y="5.5" text-anchor="middle" textLength="86" lengthAdjust="spacingAndGlyphs">2025-02-01</text>
<text class="t" transform="translate(301.3,1146.7) rotate(-45)" y="5.5" text-anchor="middle" textLength="86" lengthAdjust="spacingAndGlyphs">2025-03-01</text>
<text class="t" transform="translate(387,1146.7) rotate(-45)" y="5.5" text-anchor="middle" textLength="86" lengthAdjust="spacingAndGlyphs">2025-04-01</text>
<text class="t" transform="translate(471.1,1146.7) rotate(-45)" y="5.5" text-anchor="middle" textLength="86" lengthAdjust="spacingAndGlyphs">2025-05-01</text>
<text class="t" transform="translate(558.1,1146.7) rotate(-45)" y="5.5" text-anchor="middle" textLength="86" lengthAdjust="spacingAndGlyphs">2025-06-01</text>
<text class="t" transform="translate(640.9,1146.7) rotate(-45)" y="5.5" text-anchor="middle" textLength="86" lengthAdjust="spacingAndGlyphs">2025-07-01</text>
<text class="t" transform="translate(728.3,1146.7) rotate(-45)" y="5.5" text-anchor="middle" textLength="86" lengthAdjust="spacingAndGlyphs">2025-08-01</text>
<text class="t" transform="translate(814.4,1146.7) rotate(-45)" y="5.5" text-anchor="middle" textLength="86" lengthAdjust="spacingAndGlyphs">2025-09-01</text>
<text class="t" transform="translate(898.1,1146.7) rotate(-45)" y="5.5" text-anchor="middle" textLength="86" lengthAdjust="spacingAndGlyphs">2025-10-01</text>
<text class="t" transform="translate(983.7,1146.7) rotate(-45)" y="5.5" text-anchor="middle" textLength="86" lengthAdjust="spacingAndGlyphs">2025-11-01</text>
<text class="t" transform="translate(1068.3,1146.7) rotate(-45)" y="5.5" text-anchor="middle" textLength="86" lengthAdjust="spacingAndGlyphs">2025-12-01</text>
<text class="t" transform="translate(1155.2,1146.7) rotate(-45)" y="5.5" text-anchor="middle" textLength="86" lengthAdjust="spacingAndGlyphs">2026-01-01</text>
<text class="t" transform="translate(1240.9,1146.7) rotate(-45)" y="5.5" text-anchor="middle" textLength="86" lengthAdjust="spacingAndGlyphs">2026-02-01</text>
</g>
</svg>
</body>
</html>
